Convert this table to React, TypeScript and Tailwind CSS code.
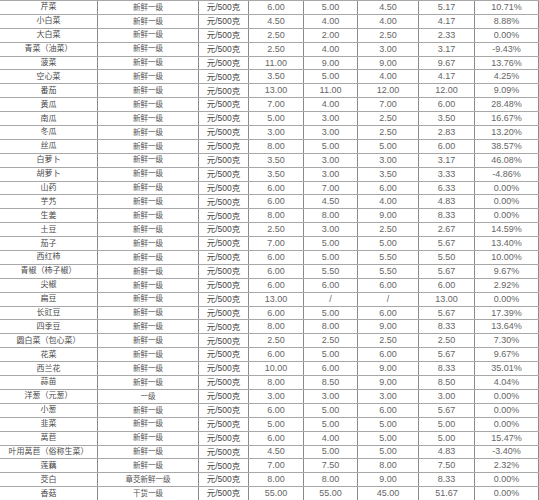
import React from 'react';

type Row = [string, string, string, string, string, string, string];

// name, grade, p1, p2, p3, avg, change
const rows: Row[] = [
  ['芹菜', '新鲜一级', '6.00', '5.00', '4.50', '5.17', '10.71%'],
  ['小白菜', '新鲜一级', '4.50', '4.00', '4.00', '4.17', '8.88%'],
  ['大白菜', '新鲜一级', '2.50', '2.00', '2.50', '2.33', '0.00%'],
  ['青菜（油菜）', '新鲜一级', '2.50', '4.00', '3.00', '3.17', '-9.43%'],
  ['菠菜', '新鲜一级', '11.00', '9.00', '9.00', '9.67', '13.76%'],
  ['空心菜', '新鲜一级', '3.50', '5.00', '4.00', '4.17', '4.25%'],
  ['番茄', '新鲜一级', '13.00', '11.00', '12.00', '12.00', '9.09%'],
  ['黄瓜', '新鲜一级', '7.00', '4.00', '7.00', '6.00', '28.48%'],
  ['南瓜', '新鲜一级', '5.00', '3.00', '2.50', '3.50', '16.67%'],
  ['冬瓜', '新鲜一级', '3.00', '3.00', '2.50', '2.83', '13.20%'],
  ['丝瓜', '新鲜一级', '8.00', '5.00', '5.00', '6.00', '38.57%'],
  ['白萝卜', '新鲜一级', '3.50', '3.00', '3.00', '3.17', '46.08%'],
  ['胡萝卜', '新鲜一级', '3.50', '3.00', '3.50', '3.33', '-4.86%'],
  ['山药', '新鲜一级', '6.00', '7.00', '6.00', '6.33', '0.00%'],
  ['芋艿', '新鲜一级', '6.00', '4.50', '4.00', '4.83', '0.00%'],
  ['生姜', '新鲜一级', '8.00', '8.00', '9.00', '8.33', '0.00%'],
  ['土豆', '新鲜一级', '2.50', '3.00', '2.50', '2.67', '14.59%'],
  ['茄子', '新鲜一级', '7.00', '5.00', '5.00', '5.67', '13.40%'],
  ['西红柿', '新鲜一级', '6.00', '5.00', '5.50', '5.50', '10.00%'],
  ['青椒（柿子椒）', '新鲜一级', '6.00', '5.50', '5.50', '5.67', '9.67%'],
  ['尖椒', '新鲜一级', '6.00', '6.00', '6.00', '6.00', '2.92%'],
  ['扁豆', '新鲜一级', '13.00', '/', '/', '13.00', '0.00%'],
  ['长豇豆', '新鲜一级', '6.00', '5.00', '6.00', '5.67', '17.39%'],
  ['四季豆', '新鲜一级', '8.00', '8.00', '9.00', '8.33', '13.64%'],
  ['圆白菜（包心菜）', '新鲜一级', '2.50', '2.50', '2.50', '2.50', '7.30%'],
  ['花菜', '新鲜一级', '6.00', '5.00', '6.00', '5.67', '9.67%'],
  ['西兰花', '新鲜一级', '10.00', '6.00', '9.00', '8.33', '35.01%'],
  ['蒜苗', '新鲜一级', '8.00', '8.50', '9.00', '8.50', '4.04%'],
  ['洋葱（元葱）', '一级', '3.00', '3.00', '3.00', '3.00', '0.00%'],
  ['小葱', '新鲜一级', '6.00', '5.00', '6.00', '5.67', '0.00%'],
  ['韭菜', '新鲜一级', '5.00', '5.00', '5.00', '5.00', '0.00%'],
  ['莴苣', '新鲜一级', '6.00', '4.00', '5.00', '5.00', '15.47%'],
  ['叶用莴苣（俗称生菜）', '新鲜一级', '4.50', '5.00', '5.00', '4.83', '-3.40%'],
  ['莲藕', '新鲜一级', '7.00', '7.50', '8.00', '7.50', '2.32%'],
  ['茭白', '章茭新鲜一级', '8.00', '8.00', '9.00', '8.33', '0.00%'],
  ['香菇', '干货一级', '55.00', '55.00', '45.00', '51.67', '0.00%'],
];

const cell = 'flex items-center justify-center border-r border-[#8a8a8a] whitespace-nowrap overflow-hidden';

export default function App() {
  return (
    <div
      className="w-[539px] h-[500px] overflow-hidden bg-white"
      style={{ fontFamily: '"Liberation Sans", Arial, "Noto Sans CJK SC", sans-serif' }}
    >
      <div className="border-t border-[#a8a8a8]">
        {rows.map((r, i) => (
          <div
            key={i}
            className="grid grid-cols-[98px_101px_50px_55px_54px_61px_56px_64px] h-[13.9px] border-b border-[#a8a8a8] leading-none"
          >
            <div className={`${cell} text-[8px] text-[#4a4a4a]`}>{r[0]}</div>
            <div className={`${cell} text-[7.5px] text-[#555]`}>{r[1]}</div>
            <div className={`${cell} text-[8.5px] text-[#444]`}>元/500克</div>
            <div className={`${cell} text-[9px] text-[#666]`}>{r[2]}</div>
            <div className={`${cell} text-[9px] text-[#666]`}>{r[3]}</div>
            <div className={`${cell} text-[9px] text-[#666]`}>{r[4]}</div>
            <div className={`${cell} text-[9px] text-[#666]`}>{r[5]}</div>
            <div className={`${cell} text-[9px] text-[#666]`}>{r[6]}</div>
          </div>
        ))}
      </div>
    </div>
  );
}
